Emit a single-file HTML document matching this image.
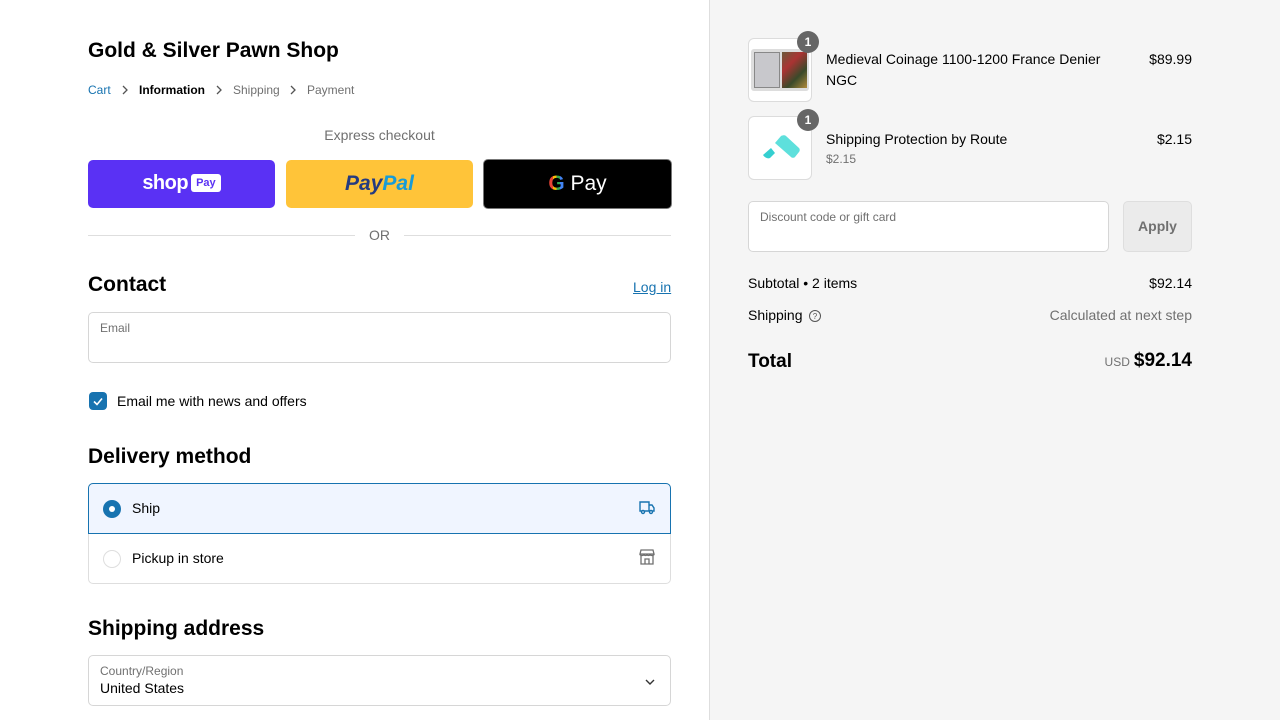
<!DOCTYPE html>
<html><head><meta charset="utf-8"><style>
*{box-sizing:border-box;margin:0;padding:0}
body{width:1280px;height:720px;overflow:hidden;font-family:"Liberation Sans",Arial,sans-serif;color:#000;background:#fff;position:relative}
.abs{position:absolute}
.right{position:absolute;left:709px;top:0;width:571px;height:720px;background:#f5f5f5;border-left:1px solid #dedede}
.input{position:absolute;border:1px solid #d6d6d6;border-radius:5px;background:#fff}
.lbl{position:absolute;font-size:12px;color:#707070}
h2{position:absolute;font-size:21px;font-weight:bold}
.thumb{position:absolute;width:64px;height:64px;border:1px solid #dcdcdc;border-radius:6px;background:#fff;overflow:visible}
.badge{position:absolute;right:-8px;top:-8px;width:22px;height:22px;border-radius:11px;background:#666;color:#fff;font-size:12px;font-weight:bold;text-align:center;line-height:22px}
.bc{position:absolute;top:83px;font-size:12px;color:#707070}
</style></head><body>
<div class="abs" style="left:88px;top:39px;font-size:21px;font-weight:bold">Gold &amp; Silver Pawn Shop</div>
<div class="bc" style="left:88px;color:#1773b0">Cart</div>
<svg class="abs" style="left:121px;top:84px" width="8" height="12"><path d="M2 2l4 4-4 4" stroke="#555" stroke-width="1.3" fill="none"/></svg>
<div class="bc" style="left:139px;color:#000;font-weight:bold">Information</div>
<svg class="abs" style="left:215px;top:84px" width="8" height="12"><path d="M2 2l4 4-4 4" stroke="#555" stroke-width="1.3" fill="none"/></svg>
<div class="bc" style="left:233px">Shipping</div>
<svg class="abs" style="left:289px;top:84px" width="8" height="12"><path d="M2 2l4 4-4 4" stroke="#555" stroke-width="1.3" fill="none"/></svg>
<div class="bc" style="left:307px">Payment</div>
<div class="abs" style="left:88px;width:583px;top:127px;text-align:center;font-size:14px;color:#707070">Express checkout</div>
<div class="abs" style="left:88px;top:160px;width:187px;height:48px;background:#5a31f4;border-radius:5px;color:#fff;text-align:center">
<span style="font-size:20px;font-weight:bold;line-height:46px;letter-spacing:-0.5px">shop</span><span style="display:inline-block;background:#fff;color:#5a31f4;font-size:11px;font-weight:bold;border-radius:3px;padding:3px 5px;margin-left:3px;vertical-align:3px">Pay</span></div>
<div class="abs" style="left:286px;top:160px;width:187px;height:48px;background:#ffc439;border-radius:5px;text-align:center;line-height:48px;font-size:21px;font-weight:bold;font-style:italic"><span style="color:#253b80">Pay</span><span style="color:#179bd7">Pal</span></div>
<div class="abs" style="left:483px;top:159px;width:189px;height:50px;background:#000;border:1px solid #777;border-radius:5px;text-align:center;line-height:48px;color:#fff;font-size:21px"><span style="font-weight:bold;background:linear-gradient(90deg,#ea4335 0 30%,#fbbc05 30% 50%,#34a853 50% 70%,#4285f4 70%);-webkit-background-clip:text;color:transparent">G</span> Pay</div>
<div class="abs" style="left:88px;top:235px;width:267px;height:1px;background:#dedede"></div>
<div class="abs" style="left:404px;top:235px;width:267px;height:1px;background:#dedede"></div>
<div class="abs" style="left:369px;top:227px;font-size:14px;color:#707070">OR</div>
<h2 style="left:88px;top:273px">Contact</h2>
<div class="abs" style="left:633px;top:279px;font-size:14px;color:#1773b0;text-decoration:underline">Log in</div>
<div class="input" style="left:88px;top:312px;width:583px;height:51px"></div>
<div class="lbl" style="left:100px;top:321px">Email</div>
<div class="abs" style="left:89px;top:392px;width:18px;height:18px;background:#1773b0;border-radius:4px"><svg width="18" height="18"><path d="M5 9.5l3 3 5-6" stroke="#fff" stroke-width="1.6" fill="none"/></svg></div>
<div class="abs" style="left:117px;top:393px;font-size:14px">Email me with news and offers</div>
<h2 style="left:88px;top:445px">Delivery method</h2>
<div class="abs" style="left:88px;top:483px;width:583px;height:101px;border:1px solid #dedede;border-radius:5px"></div>
<div class="abs" style="left:88px;top:483px;width:583px;height:51px;background:#f0f5ff;border:1px solid #1773b0;border-radius:5px 5px 0 0"></div>
<div class="abs" style="left:103px;top:500px;width:18px;height:18px;border-radius:9px;background:#1773b0"><div style="position:absolute;left:6px;top:6px;width:6px;height:6px;border-radius:3px;background:#fff"></div></div>
<div class="abs" style="left:132px;top:500px;font-size:14px">Ship</div>
<svg class="abs" style="left:638px;top:499px" width="18" height="18" fill="none" stroke="#1773b0" stroke-width="1.4"><path d="M2 3h9v9H2zM11 6h3l2 3v3h-5"/><circle cx="5" cy="13" r="1.5" fill="#f0f5ff"/><circle cx="13" cy="13" r="1.5" fill="#f0f5ff"/></svg>
<div class="abs" style="left:103px;top:550px;width:18px;height:18px;border-radius:9px;border:1px solid #dedede"></div>
<div class="abs" style="left:132px;top:550px;font-size:14px">Pickup in store</div>
<svg class="abs" style="left:638px;top:548px" width="18" height="18" fill="none" stroke="#707070" stroke-width="1.3"><path d="M3 2h12l1 4H2zM2 6c0 2 4 2 4 0 0 2 3 2 3 0 0 2 3 2 3 0 0 2 4 2 4 0M3 8v8h12V8M7 16v-5h4v5"/></svg>
<h2 style="left:88px;top:617px">Shipping address</h2>
<div class="input" style="left:88px;top:655px;width:583px;height:51px"></div>
<div class="lbl" style="left:100px;top:664px">Country/Region</div>
<div class="abs" style="left:100px;top:680px;font-size:14px">United States</div>
<svg class="abs" style="left:644px;top:677px" width="12" height="10"><path d="M2 3l4 4 4-4" stroke="#333" stroke-width="1.4" fill="none"/></svg>

<div class="right">
<div class="thumb" style="left:38px;top:38px"><div style="position:absolute;left:2px;top:10px;width:58px;height:42px;background:#ddd;border-radius:3px"><div style="position:absolute;left:3px;top:3px;width:26px;height:36px;background:#c8c8cc;border:1px solid #888"></div><div style="position:absolute;left:31px;top:3px;width:25px;height:36px;background:linear-gradient(135deg,#6b5a3a,#a33,#3a4a2a,#b08a3a)"></div></div><div class="badge">1</div></div>
<div class="abs" style="left:116px;top:49px;font-size:14px;line-height:21px;width:290px">Medieval Coinage 1100-1200 France Denier NGC</div>
<div class="abs" style="right:88px;top:51px;font-size:14px">$89.99</div>
<div class="thumb" style="left:38px;top:116px"><svg style="position:absolute;left:10px;top:17px" width="44" height="30"><path d="M22 2c2-1 4-1 5 0l13 12c1 1 1 3 0 4l-4 5c-1 1-3 1-4 0L16 9z" fill="#5ee0dc"/><path d="M4 21l8-7 4 5-5 5c-2 1-5 0-7-3z" fill="#35cfd0"/></svg><div class="badge">1</div></div>
<div class="abs" style="left:116px;top:131px;font-size:14px">Shipping Protection by Route</div>
<div class="abs" style="left:116px;top:152px;font-size:12px;color:#707070">$2.15</div>
<div class="abs" style="right:88px;top:131px;font-size:14px">$2.15</div>
<div class="input" style="left:38px;top:201px;width:361px;height:51px"></div>
<div class="lbl" style="left:50px;top:210px">Discount code or gift card</div>
<div class="abs" style="left:413px;top:201px;width:69px;height:51px;border:1px solid #dedede;border-radius:5px;background:#ebebeb;color:#707070;font-size:14px;font-weight:bold;text-align:center;line-height:49px">Apply</div>
<div class="abs" style="left:38px;top:275px;font-size:14px">Subtotal • 2 items</div>
<div class="abs" style="right:88px;top:275px;font-size:14px">$92.14</div>
<div class="abs" style="left:38px;top:307px;font-size:14px">Shipping <svg width="14" height="14" style="vertical-align:-3px;margin-left:2px"><circle cx="7" cy="7" r="5.5" stroke="#555" fill="none"/><text x="7" y="10" font-size="8" text-anchor="middle" fill="#555" font-family="Liberation Sans">?</text></svg></div>
<div class="abs" style="right:88px;top:307px;font-size:14px;color:#707070">Calculated at next step</div>
<div class="abs" style="left:38px;top:351px;font-size:19px;font-weight:bold">Total</div>
<div class="abs" style="right:88px;top:350px;font-size:19px;font-weight:bold"><span style="font-size:12px;font-weight:normal;color:#707070;margin-right:4px">USD</span>$92.14</div>
</div>
</body></html>
